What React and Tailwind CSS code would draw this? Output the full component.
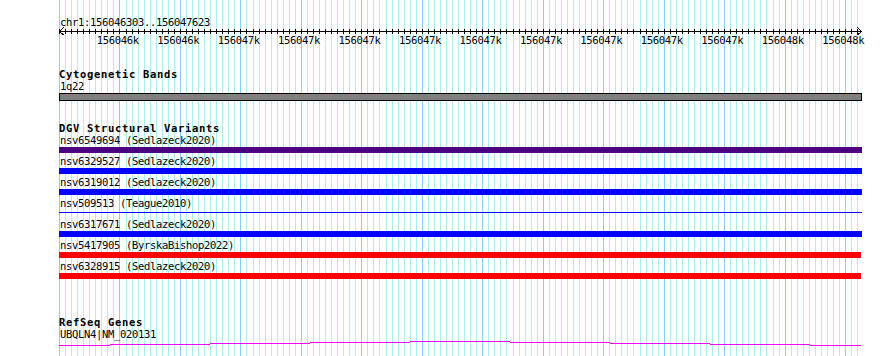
import React from "react";

const GX = Array.from({ length: 133 }, (_, i) => 59 + Math.round(i * 6.047));
const LABELS = [
  "156046k", "156046k", "156047k", "156047k", "156047k", "156047k", "156047k",
  "156047k", "156047k", "156047k", "156047k", "156048k", "156048k",
];

const ROWS = [
  { label: "nsv6549694 (Sedlazeck2020)", color: "bg-[#4b0082]", kind: "bar" },
  { label: "nsv6329527 (Sedlazeck2020)", color: "bg-[#0000ff]", kind: "bar" },
  { label: "nsv6319012 (Sedlazeck2020)", color: "bg-[#0000ff]", kind: "bar" },
  { label: "nsv509513 (Teague2010)", color: "bg-[#0000ff]", kind: "line" },
  { label: "nsv6317671 (Sedlazeck2020)", color: "bg-[#0000ff]", kind: "bar" },
  { label: "nsv5417905 (ByrskaBishop2022)", color: "bg-[#ff0000]", kind: "red" },
  { label: "nsv6328915 (Sedlazeck2020)", color: "bg-[#ff0000]", kind: "red" },
];

const GENE_STEPS = [
  [59, 110, 345], [110, 210, 344], [210, 310, 343], [310, 410, 342], [410, 510, 341],
  [510, 610, 342], [610, 710, 343], [710, 810, 344], [810, 861, 345],
];

function Grid() {
  return (
    <svg className="absolute left-0 top-0" width="890" height="356">
      {GX.map((x, i) => (
        <rect key={i} x={x} y={0} width={1} height={356} fill={i % 10 === 0 ? "#87cefa" : "#afeeee"} />
      ))}
    </svg>
  );
}

function Ruler() {
  return (
    <svg width="804" height="8" className="block" shapeRendering="crispEdges">
      <rect x={0} y={4} width={803} height={1} fill="#000" />
      {GX.map((x, i) => (
        <rect key={i} x={x - 59} y={2} width={1} height={5} fill="#000" />
      ))}
      <polyline points="4.5,0.5 0.5,4.5 4.5,8" fill="none" stroke="#000" strokeWidth="1" />
      <polyline points="798.5,0.5 802.5,4.5 798.5,8" fill="none" stroke="#000" strokeWidth="1" />
    </svg>
  );
}

function GeneLine() {
  return (
    <svg width="804" height="8" className="block" shapeRendering="crispEdges">
      {GENE_STEPS.map(([a, b, y], i) => (
        <rect key={i} x={a - 59} y={y - 339} width={b - a} height={1} fill="#ff00ff" />
      ))}
    </svg>
  );
}

export default function App() {
  const small = "h-[10px] text-[10.5px] leading-[10px] tracking-[-0.32px] pl-[1px] whitespace-nowrap";
  const title = "h-[11px] text-[10.5px] leading-[11px] font-bold tracking-[0.68px] whitespace-nowrap";
  return (
    <div className="relative w-[890px] h-[356px] overflow-hidden bg-white text-black font-['DejaVu_Sans_Mono',monospace]">
      <Grid />
      <div className="relative pl-[59px] pt-[17px] w-[890px]">
        <div className={small}>chr1:156046303..156047623</div>
        <Ruler />
        <div className="flex h-[10px] ml-[28.5px] text-[10.5px] leading-[10px] tracking-[-0.32px]">
          {LABELS.map((l, i) => (
            <div key={i} className="w-[60.46px] shrink-0 text-center whitespace-nowrap">
              {l}
            </div>
          ))}
        </div>

        <div className={`mt-[24px] ${title}`}>Cytogenetic Bands</div>
        <div className={`mt-[1px] ${small}`}>1q22</div>
        <div className="mt-[2px] h-[8px] w-[803px] border border-black bg-[#808080]" />

        <div className={`mt-[22px] ${title}`}>DGV Structural Variants</div>
        {ROWS.map((r, i) => (
          <div key={i} className={i === 0 ? "mt-[1px]" : "mt-[3px]"}>
            <div className={small}>{r.label}</div>
            {r.kind === "line" ? (
              <div className="mt-[2px] h-[6px] w-[803px] pt-[2px]">
                <div className={`h-[1px] w-full ${r.color}`} />
              </div>
            ) : (
              <div className={`mt-[2px] h-[6px] ${r.kind === "red" ? "w-[802px]" : "w-[803px]"} ${r.color}`} />
            )}
          </div>
        ))}

        <div className={`mt-[38px] ${title}`}>RefSeq Genes</div>
        <div className={`mt-[1px] ${small}`}>UBQLN4|NM_020131</div>
        <GeneLine />
      </div>
    </div>
  );
}
